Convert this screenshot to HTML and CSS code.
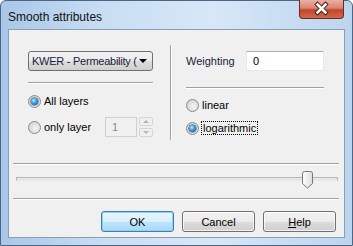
FILE: index.html
```html
<!DOCTYPE html>
<html lang="en">
<head>
	<meta charset="UTF-8">
	<title>Smooth attributes</title>
	<link rel="stylesheet" href="styles.css">
</head>
<body>

	<div class="window">
		<div class="titlebar">
			<div class="title">Smooth attributes</div>
			<div class="close-btn">
				<svg width="45" height="19" viewBox="0 0 45 19">
					<path d="M18.5 5.5 L26.5 13.5 M26.5 5.5 L18.5 13.5" stroke="#4a1d14" stroke-width="4.5" stroke-linecap="square"/>
					<path d="M18.5 5.5 L26.5 13.5 M26.5 5.5 L18.5 13.5" stroke="#ffffff" stroke-width="2.6" stroke-linecap="square"/>
				</svg>
			</div>
		</div>

		<div class="client">
			<div class="top">
				<div class="col-left">
					<div class="combo">
						<span class="combo-text">KWER - Permeability (</span>
						<span class="combo-arrow"></span>
					</div>
					<div class="sep sep-left"></div>
					<label class="radio-row row-all">
						<span class="radio checked"></span>
						<span>All layers</span>
					</label>
					<div class="radio-row row-only">
						<label class="radio-label">
							<span class="radio"></span>
							<span>only layer</span>
						</label>
						<div class="spin">
							<div class="spin-input">1</div>
							<div class="spin-btns">
								<div class="spin-btn"><span class="arr up"></span></div>
								<div class="spin-btn"><span class="arr down"></span></div>
							</div>
						</div>
					</div>
				</div>

				<div class="divider"></div>

				<div class="col-right">
					<div class="weight-row">
						<span>Weighting</span>
						<div class="textbox">0</div>
					</div>
					<div class="sep sep-right"></div>
					<label class="radio-row row-linear">
						<span class="radio"></span>
						<span>linear</span>
					</label>
					<label class="radio-row row-log">
						<span class="radio checked"></span>
						<span class="focus">logarithmic</span>
					</label>
				</div>
			</div>

			<div class="sep sep-wide sep-1"></div>

			<div class="slider">
				<div class="track"></div>
				<svg class="thumb" width="12" height="18" viewBox="0 0 12 18">
					<defs>
						<linearGradient id="tg" x1="0" y1="0" x2="1" y2="0">
							<stop offset="0" stop-color="#ffffff"/>
							<stop offset="1" stop-color="#dcdcdc"/>
						</linearGradient>
					</defs>
					<path d="M0.5 2.5 Q0.5 0.5 2.5 0.5 H8.5 Q10.5 0.5 10.5 2.5 V12.5 L5.5 17 L0.5 12.5 Z" fill="url(#tg)" stroke="#777777"/>
				</svg>
			</div>

			<div class="sep sep-wide sep-2"></div>

			<div class="buttons">
				<button class="btn default">OK</button>
				<button class="btn">Cancel</button>
				<button class="btn"><u>H</u>elp</button>
			</div>
		</div>
	</div>

</body>
</html>
```

FILE: styles.css
```css
body {
	margin: 0;
	font-family: "Liberation Sans", Arial, sans-serif;
	font-size: 11px;
	color: #000;
}
.window {
	width: 353px;
	height: 246px;
	box-sizing: border-box;
	border: 1px solid #4d6686;
	border-radius: 6px 6px 0 0;
	background: linear-gradient(to right, #a9c7e8, #c9def3 30%, #d7e7f7 60%, #bcd5ee);
	display: flex;
	flex-direction: column;
}
.titlebar {
	height: 28px;
	display: flex;
	justify-content: space-between;
	align-items: flex-start;
}
.title {
	padding: 9px 0 0 7px;
	font-size: 12px;
	color: #111;
}
.close-btn {
	width: 45px;
	height: 19px;
	margin: -1px 8px 0 0;
	box-sizing: border-box;
	border: 1px solid #6b2b20;
	border-top: none;
	border-radius: 0 0 4px 4px;
	background: linear-gradient(to bottom, #eab0a2, #d98672 45%, #c2452c 55%, #d06a4c);
}
.close-btn svg {
	display: block;
	margin: -1px 0 0 -1px;
}
.client {
	margin: 0 7px;
	height: 209px;
	box-sizing: border-box;
	border: 1px solid #8b9db3;
	background: #f0f0f0;
	display: flex;
	flex-direction: column;
}
.top {
	display: flex;
	padding-top: 15px;
	height: 95px;
}
.col-left {
	margin-left: 19px;
	width: 125px;
	padding-top: 6px;
}
.divider {
	width: 1px;
	margin-left: 17px;
	background: #a0a0a0;
	border-right: 1px solid #fff;
}
.col-right {
	margin-left: 14px;
	width: 138px;
	padding-top: 6px;
}
.combo {
	height: 20px;
	box-sizing: border-box;
	border: 1px solid #707070;
	border-radius: 3px;
	background: linear-gradient(to bottom, #f2f2f2, #ebebeb 50%, #dddddd 50%, #cfcfcf);
	display: flex;
	align-items: center;
	justify-content: space-between;
	padding: 0 5px 0 3px;
	white-space: nowrap;
}
.combo-text {
	letter-spacing: -0.25px;
	color: #1a1a40;
}
.combo-arrow {
	flex-shrink: 0;
	width: 0;
	height: 0;
	border-left: 4px solid transparent;
	border-right: 4px solid transparent;
	border-top: 4px solid #000;
}
.sep {
	border-top: 1px solid #a0a0a0;
	border-bottom: 1px solid #fff;
}
.sep-left {
	margin-top: 11px;
}
.sep-right {
	margin-top: 16px;
}
.radio-row {
	display: flex;
	align-items: center;
	height: 20px;
	gap: 3px;
}
.radio-label {
	display: flex;
	align-items: center;
	gap: 3px;
}
.row-all {
	margin-top: 7px;
}
.row-only {
	margin-top: 6px;
	justify-content: space-between;
}
.row-linear {
	margin-top: 6px;
}
.row-log {
	margin-top: 3px;
}
.radio {
	width: 13px;
	height: 13px;
	box-sizing: border-box;
	border-radius: 50%;
	border: 1px solid #8a8a8a;
	background: radial-gradient(circle at 60% 60%, #f4f4f4, #d7d7d7 70%, #c8c8c8);
	display: flex;
	align-items: center;
	justify-content: center;
}
.radio.checked::after {
	content: "";
	width: 7px;
	height: 7px;
	border-radius: 50%;
	background: radial-gradient(circle at 40% 35%, #b8ecff, #3a9ad8 45%, #0d4f8a);
	box-shadow: 0 0 0 0.5px #0c3c6a;
}
.spin {
	display: flex;
	gap: 2px;
}
.spin-input {
	width: 32px;
	height: 20px;
	box-sizing: border-box;
	border: 1px solid #d0d0d0;
	color: #8f8b77;
	padding: 3px 0 0 6px;
}
.spin-btns {
	display: flex;
	flex-direction: column;
	justify-content: space-between;
	height: 20px;
}
.spin-btn {
	width: 14px;
	height: 9px;
	box-sizing: border-box;
	border: 1px solid #d5d5d5;
	border-radius: 2px;
	display: flex;
	align-items: center;
	justify-content: center;
}
.arr {
	width: 0;
	height: 0;
	border-left: 3px solid transparent;
	border-right: 3px solid transparent;
}
.arr.up {
	border-bottom: 3px solid #b5b5b5;
}
.arr.down {
	border-top: 3px solid #b5b5b5;
}
.weight-row {
	height: 20px;
	display: flex;
	align-items: center;
	justify-content: space-between;
	color: #1a1a40;
}
.textbox {
	width: 78px;
	height: 20px;
	box-sizing: border-box;
	background: #fff;
	border: 1px solid #e3e9ef;
	border-top-color: #abadb3;
	padding: 3px 0 0 6px;
	color: #000;
}
.focus {
	outline: 1px dotted #000;
	padding: 0 1px;
	line-height: 12px;
}
.sep-wide {
	margin-left: 4px;
	width: 326px;
}
.sep-1 {
	margin-top: 23px;
}
.slider {
	position: relative;
	height: 18px;
	margin-top: 6px;
}
.track {
	margin: 6px 0 0 7px;
	width: 320px;
	height: 2px;
	border: 1px solid #b8b8b8;
	border-bottom-color: #e8e8e8;
	background: #e6e6e6;
}
.thumb {
	position: absolute;
	left: 293px;
	top: 0;
}
.sep-2 {
	margin-top: 9px;
}
.buttons {
	display: flex;
	justify-content: flex-end;
	gap: 8px;
	margin: 11px 8px 0 0;
}
.btn {
	width: 73px;
	height: 21px;
	font-family: inherit;
	font-size: 11px;
	color: #000;
	border: 1px solid #707070;
	border-radius: 3px;
	background: linear-gradient(to bottom, #f2f2f2, #ebebeb 50%, #dddddd 50%, #cfcfcf);
	padding: 0;
	box-shadow: inset 0 0 0 1px rgba(255,255,255,0.7);
}
.btn.default {
	border-color: #3c7fb1;
	background: linear-gradient(to bottom, #eaf6fd, #d9f0fc 50%, #bee6fd 50%, #a7d9f5);
	box-shadow: inset 0 0 0 1px #8fd0f3;
}
```
